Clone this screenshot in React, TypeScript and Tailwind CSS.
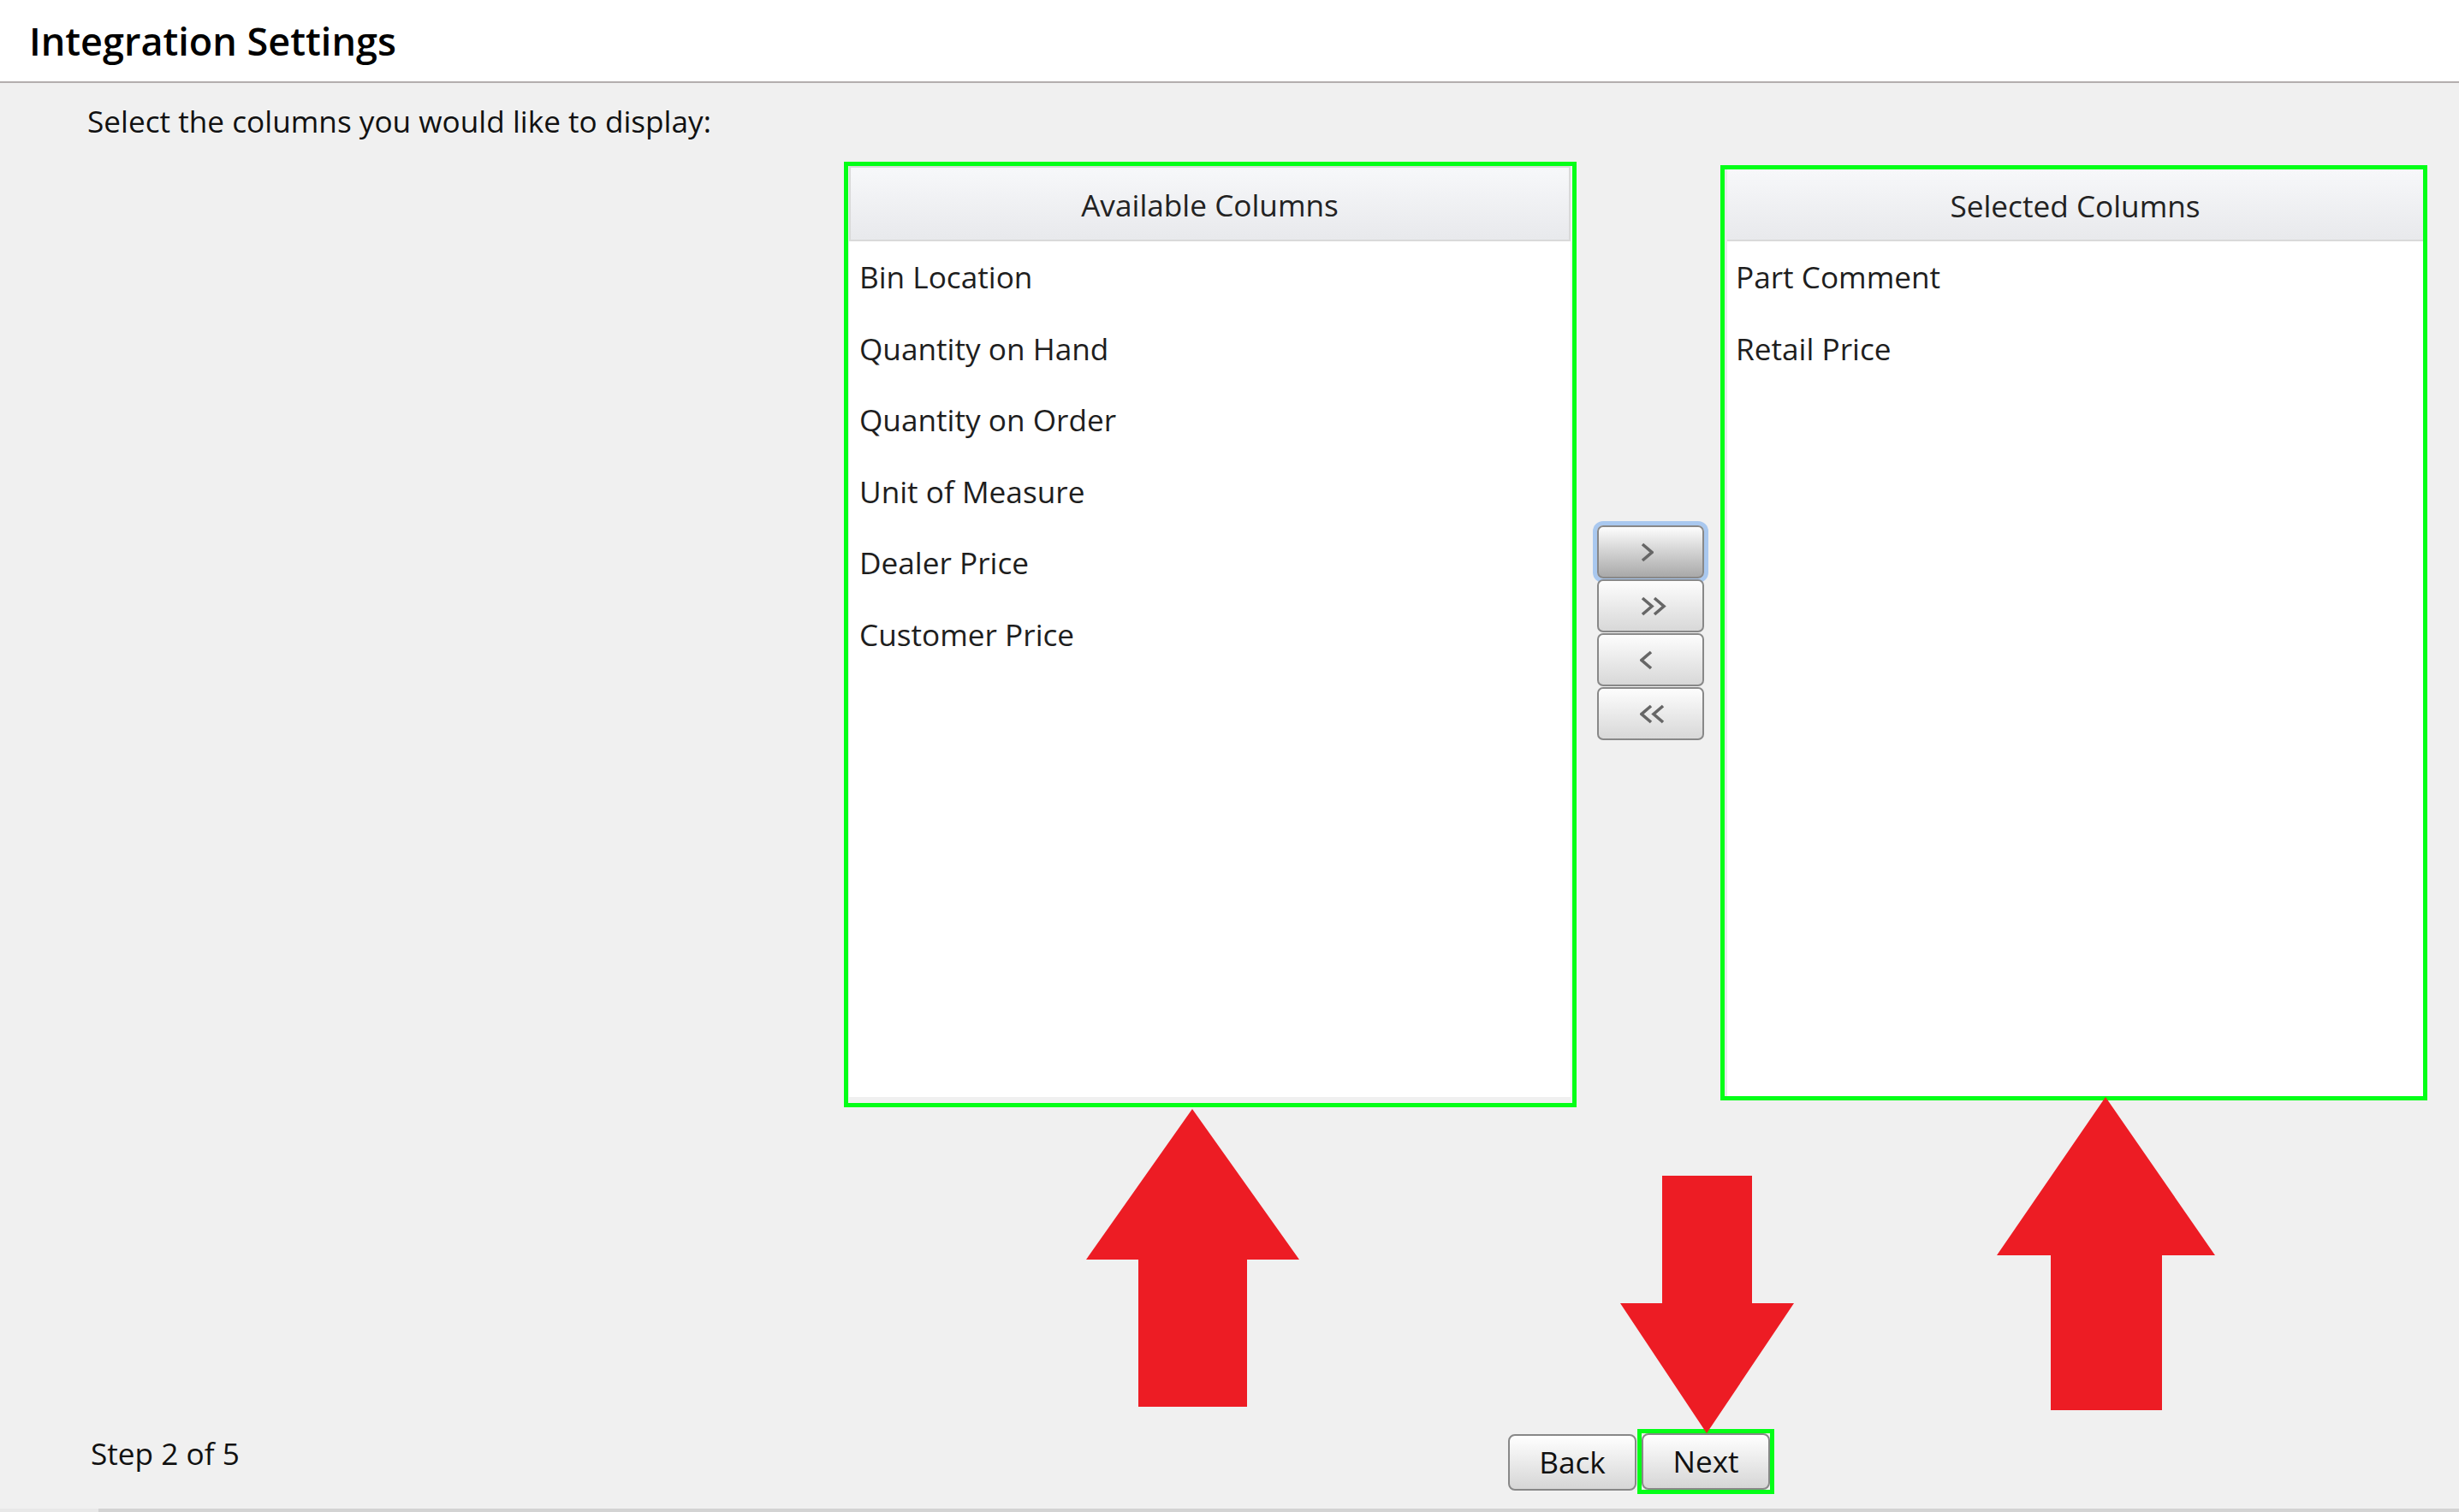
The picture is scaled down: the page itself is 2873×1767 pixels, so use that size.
import React from 'react';

const available = ['Bin Location', 'Quantity on Hand', 'Quantity on Order', 'Unit of Measure', 'Dealer Price', 'Customer Price'];
const selected = ['Part Comment', 'Retail Price'];

const Chevrons = ({ dir, count }: { dir: 'right' | 'left'; count: 1 | 2 }) => {
  const one = dir === 'right' ? '2,2 13,11.5 2,21' : '13,2 2,11.5 13,21';
  const two = dir === 'right' ? '16,2 27,11.5 16,21' : '27,2 16,11.5 27,21';
  return (
    <svg width={count === 2 ? 30 : 15} height={23} viewBox={count === 2 ? '0 0 30 23' : '0 0 15 23'} fill="none">
      <polyline points={one} stroke="#666" strokeWidth={3.6} strokeLinejoin="miter" />
      {count === 2 && <polyline points={two} stroke="#666" strokeWidth={3.6} strokeLinejoin="miter" />}
    </svg>
  );
};

const App = () => {
  return (
    <div className="relative w-[2873px] h-[1767px] overflow-hidden bg-[#f0f0f0] flex flex-col font-['Open_Sans','Noto_Sans',sans-serif]">
      {/* header */}
      <div className="h-[97px] shrink-0 bg-white border-b-2 border-[#b3aeae] pl-[34px] pt-[17px]">
        <h1 className="text-[45px] leading-[62px] font-semibold text-black">Integration Settings</h1>
      </div>

      <div className="pl-[102px] pt-[20px] text-[35.2px] leading-[48px] text-[#111]">
        Select the columns you would like to display:
      </div>

      {/* list boxes */}
      <div className="flex items-start pl-[986px] mt-[24px]">
        <div className="w-[856px] h-[1105px] border-[5px] border-[#03ff17] pl-[1px] pr-[2px] pb-[7px] flex">
          <div className="flex-1 flex flex-col bg-white">
            <div className="h-[88px] shrink-0 border-2 border-[#d9d9d9] bg-linear-to-b from-[#f7f8fa] to-[#e8e9ec] flex items-center justify-center pt-[3px] text-[35.2px] leading-none text-[#222]">
              Available Columns
            </div>
            <div className="flex flex-col">
              {available.map((item) => (
                <div key={item} className="h-[83.5px] pl-[12px] flex items-center text-[35.2px] leading-none text-[#1e1e1e]">
                  {item}
                </div>
              ))}
            </div>
          </div>
        </div>

        <div className="ml-[24px] mt-[425px] w-[125px] flex flex-col gap-[1px]">
          <button className="h-[62px] rounded-[7px] border-2 border-[#888] ring-[5px] ring-[#a9c8ef] bg-linear-to-b from-[#fdfdfd] to-[#a9a9a9] flex items-center pl-[49px]">
            <Chevrons dir="right" count={1} />
          </button>
          <button className="h-[62px] rounded-[7px] border-2 border-[#888] bg-linear-to-b from-[#fdfdfd] to-[#d8d8d8] flex items-center pl-[49px]">
            <Chevrons dir="right" count={2} />
          </button>
          <button className="h-[62px] rounded-[7px] border-2 border-[#888] bg-linear-to-b from-[#fdfdfd] to-[#d8d8d8] flex items-center pl-[48px]">
            <Chevrons dir="left" count={1} />
          </button>
          <button className="h-[62px] rounded-[7px] border-2 border-[#888] bg-linear-to-b from-[#fdfdfd] to-[#d8d8d8] flex items-center pl-[48px]">
            <Chevrons dir="left" count={2} />
          </button>
        </div>

        <div className="ml-[19px] mt-[4px] w-[826px] h-[1093px] border-[5px] border-[#03ff17] flex">
          <div className="flex-1 flex flex-col bg-white border-l-[3px] border-[#e9e9e9]">
            <div className="h-[84px] shrink-0 border-b-2 border-[#d9d9d9] bg-linear-to-b from-[#f7f8fa] to-[#e8e9ec] flex items-center justify-center pt-[3px] text-[35.2px] leading-none text-[#222]">
              Selected Columns
            </div>
            <div className="flex flex-col">
              {selected.map((item) => (
                <div key={item} className="h-[83.5px] pl-[10px] flex items-center text-[35.2px] leading-none text-[#1e1e1e]">
                  {item}
                </div>
              ))}
            </div>
          </div>
        </div>
      </div>

      {/* footer */}
      <div className="mt-[376px] flex items-start">
        <div className="w-[1762px] pl-[106px] pt-[4px] text-[35.2px] leading-[48px] text-[#111]">Step 2 of 5</div>
        <button className="mt-[6px] w-[150px] h-[66px] rounded-[8px] border-2 border-[#888] bg-linear-to-b from-white to-[#d6d6d6] flex items-center justify-center text-[35.2px] leading-none text-[#111]">
          Back
        </button>
        <div className="ml-[1px] border-[5px] border-[#03ff17]">
          <button className="w-[150px] h-[66px] rounded-[8px] border-2 border-[#888] bg-linear-to-b from-white to-[#d6d6d6] flex items-center justify-center text-[35.2px] leading-none text-[#111]">
            Next
          </button>
        </div>
      </div>

      <div className="mt-auto h-[4px] flex">
        <div className="w-[115px] bg-[#e8e8e8]" />
        <div className="flex-1 bg-[#d3d3d3]" />
      </div>

      {/* red annotation arrows */}
      <svg className="absolute inset-0 pointer-events-none" width={2873} height={1767} viewBox="0 0 2873 1767">
        <polygon fill="#ed1c24" points="1393,1296 1518,1472 1457,1472 1457,1644 1330,1644 1330,1472 1269,1472" />
        <polygon fill="#ed1c24" points="2460,1282 2588,1467 2526,1467 2526,1648 2396,1648 2396,1467 2333,1467" />
        <polygon fill="#ed1c24" points="1942,1374 2047,1374 2047,1523 2096,1523 1994,1675 1893,1523 1942,1523" />
      </svg>
    </div>
  );
};

export default App;
